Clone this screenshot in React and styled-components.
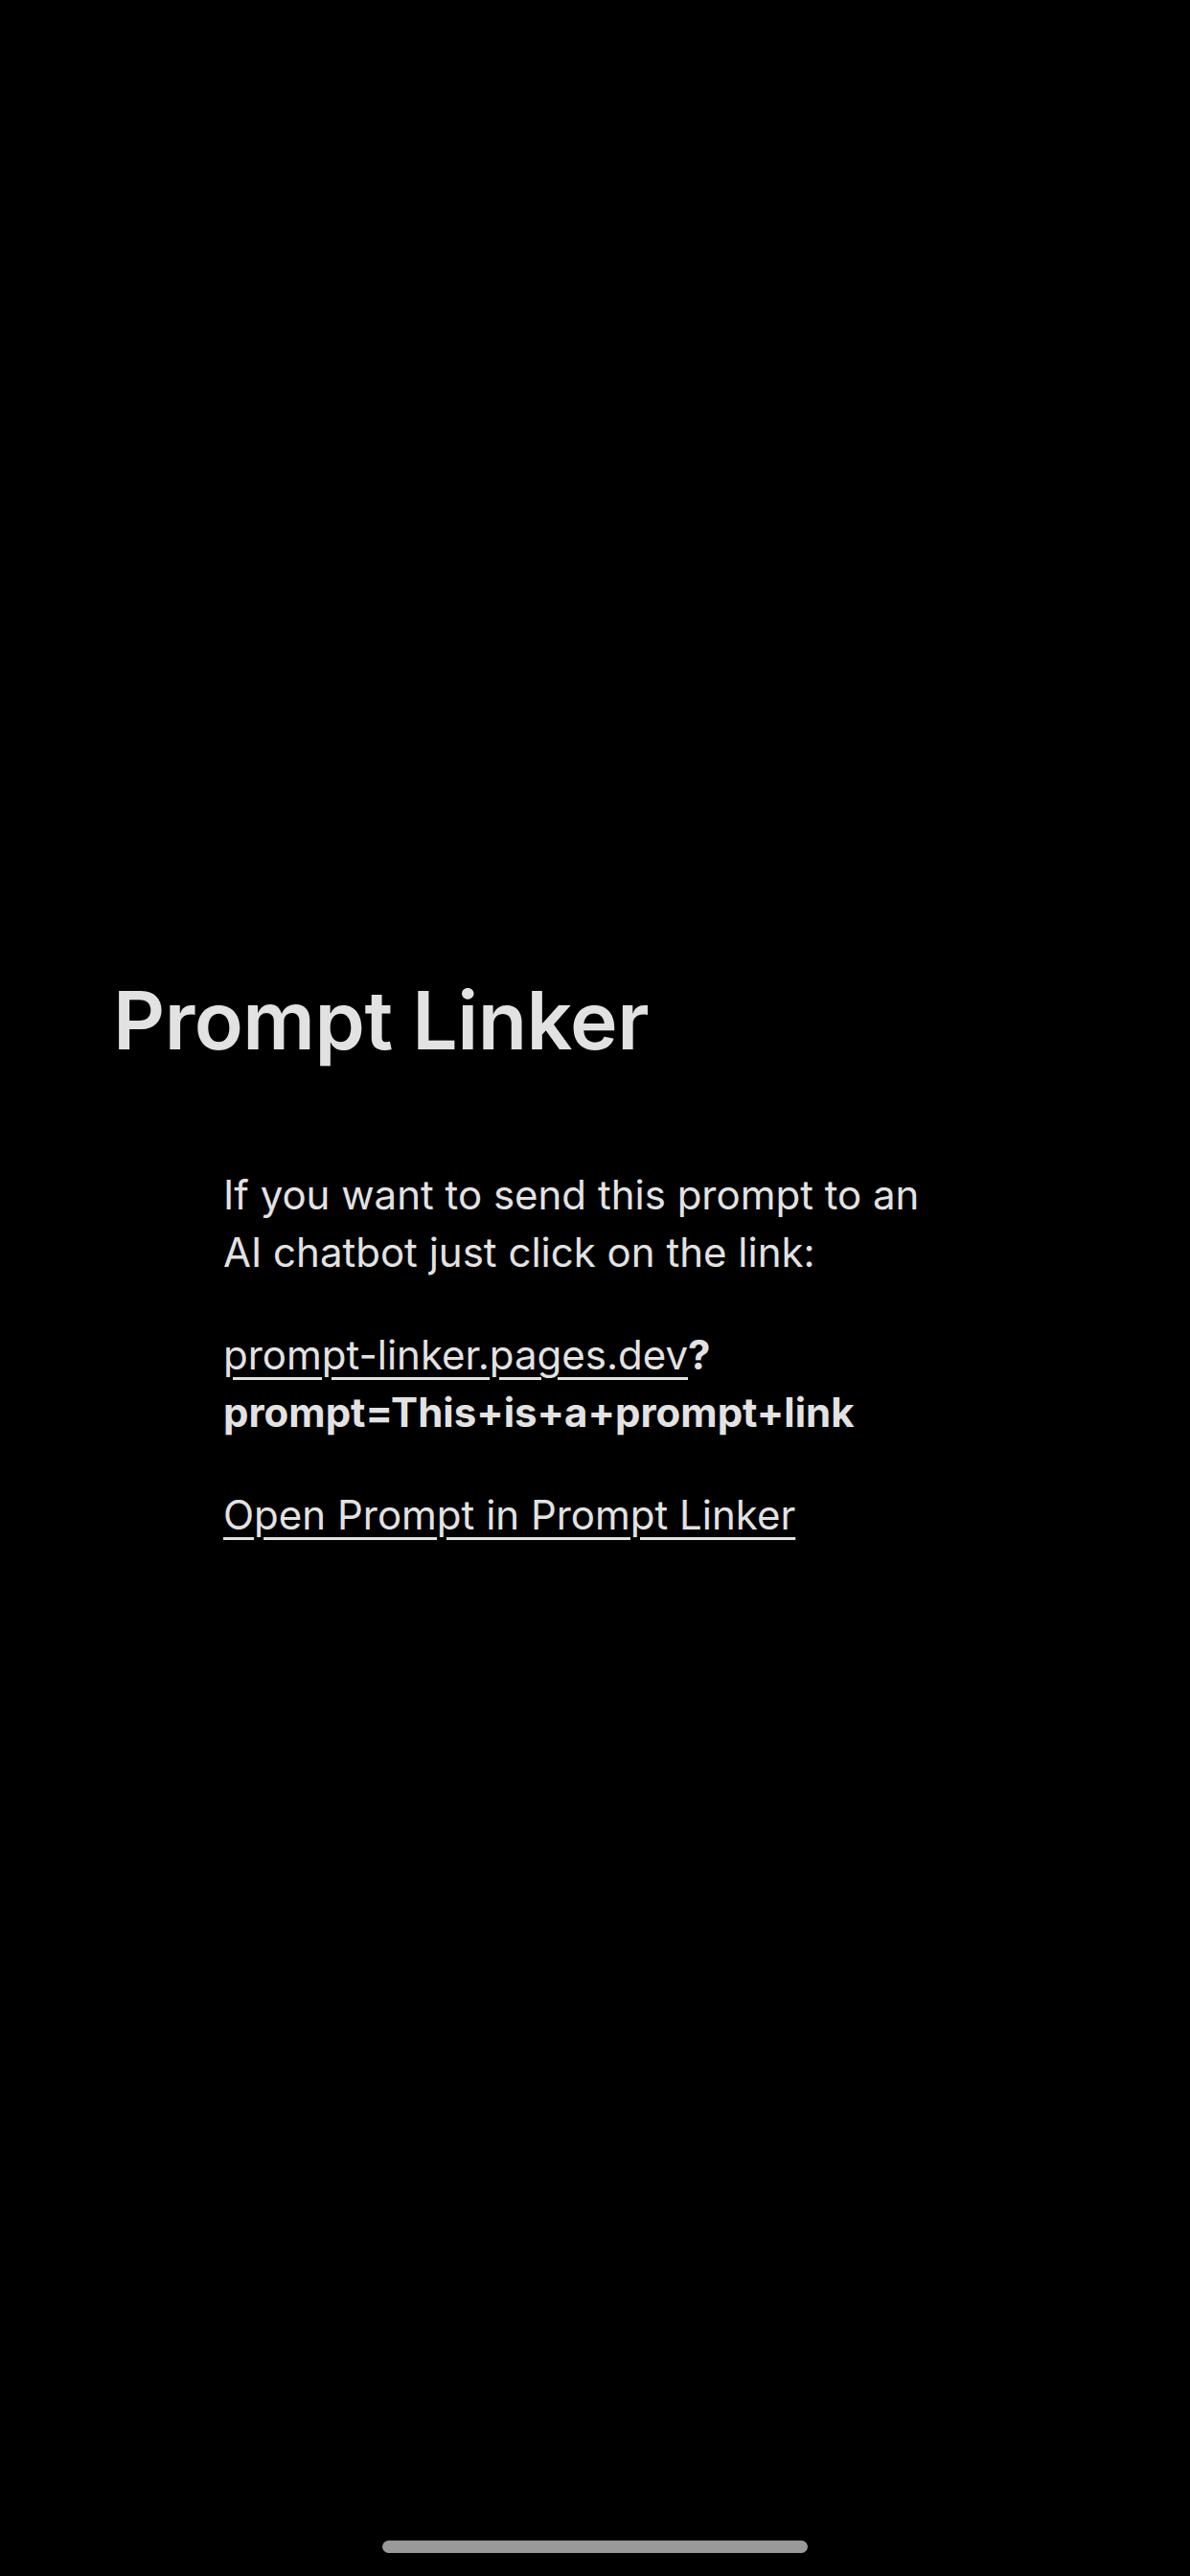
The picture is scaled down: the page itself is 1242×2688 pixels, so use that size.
import React from 'react'
import styled, { createGlobalStyle } from 'styled-components';

const GlobalStyle = createGlobalStyle`
    html, body {
        margin: 0;
        padding: 0;
        background: #000;
    }
    body {
        font-family: Inter, "Open Sans", "Liberation Sans", sans-serif;
        color: #e2e2e2;
    }
`;

const Page = styled.div`
    position: relative;
    width: 1242px;
    height: 2688px;
    box-sizing: border-box;
    padding: 1017px 0 0 118px;
    background: #000;
    overflow: hidden;
`;

const Title = styled.h1`
    margin: 0;
    font-size: 84px;
    line-height: 96px;
    font-weight: 600;
    letter-spacing: -0.5px;
    color: #e2e2e2;
`;

const Content = styled.div`
    margin: 104px 0 0 115px;
    width: 745px;
    display: flex;
    flex-direction: column;
    gap: 47px;
`;

const Paragraph = styled.p`
    margin: 0;
    font-size: 42px;
    line-height: 60px;
    font-weight: 400;
    color: #e2e2e2;
`;

const Link = styled.a`
    color: inherit;
    text-decoration: underline;
    text-decoration-thickness: 3px;
    text-underline-offset: 8px;
    cursor: pointer;
`;

const Query = styled.strong`
    font-weight: 700;
`;

const HomeIndicator = styled.div`
    position: absolute;
    left: 50%;
    bottom: 24px;
    width: 444px;
    height: 13px;
    margin-left: -222px;
    border-radius: 7px;
    background: #999;
`;

const App = () => {
  return (
    <>
      <GlobalStyle />
      <Page>
        <Title>Prompt Linker</Title>
        <Content>
          <Paragraph>
            If you want to send this prompt to an AI chatbot just click on the link:
          </Paragraph>
          <Paragraph>
            <Link href="#">prompt-linker.pages.dev</Link>
            <Query>?<wbr />prompt=This+is+a+prompt+link</Query>
          </Paragraph>
          <Paragraph>
            <Link href="#">Open Prompt in Prompt Linker</Link>
          </Paragraph>
        </Content>
        <HomeIndicator />
      </Page>
    </>
  )
}

export default App
